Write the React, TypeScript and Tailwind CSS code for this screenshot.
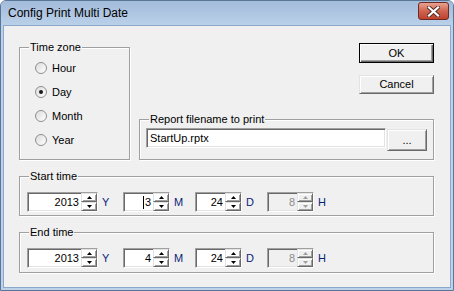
import type { ReactNode } from "react";

const sunken =
  "border border-t-[#a0a0a0] border-l-[#a0a0a0] border-b-white border-r-white shadow-[inset_1px_1px_0_#696969,inset_-1px_-1px_0_#e3e3e3]";
const raised =
  "border border-t-[#e3e3e3] border-l-[#e3e3e3] border-b-[#696969] border-r-[#696969] shadow-[inset_1px_1px_0_#fff,inset_-1px_-1px_0_#a0a0a0]";

function Group({ label, className, children }: { label: string; className: string; children: ReactNode }) {
  return (
    <div className={`border border-[#a0a0a0] shadow-[inset_1px_1px_0_#fff,1px_1px_0_#fff] ${className}`}>
      <div className="-mt-[7px] ml-[9px] w-fit bg-[#f0f0f0] px-px leading-[13px]">{label}</div>
      {children}
    </div>
  );
}

function Radio({ label, checked }: { label: string; checked?: boolean }) {
  return (
    <div className="flex h-[24px] items-center">
      <div className="flex h-[12px] w-[12px] items-center justify-center rounded-full border border-[#8e8f8f] bg-gradient-to-br from-[#dcdcdc] to-white">
        {checked && <div className="h-[4px] w-[4px] rounded-full bg-[#1a1a1a]" />}
      </div>
      <span className="ml-[5px]">{label}</span>
    </div>
  );
}

function Arrow({ up, disabled }: { up?: boolean; disabled?: boolean }) {
  return (
    <div className={`flex flex-1 items-center justify-center ${raised}`}>
      <svg width="5" height="3" viewBox="0 0 5 3">
        <path
          d={up ? "M2.5 0L5 3H0Z" : "M0 0H5L2.5 3Z"}
          fill={disabled ? "#a0a0a0" : "#000"}
        />
      </svg>
    </div>
  );
}

function Spin({
  value,
  width,
  unit,
  unitWidth,
  disabled,
  caret,
}: {
  value: string;
  width: string;
  unit: string;
  unitWidth: string;
  disabled?: boolean;
  caret?: boolean;
}) {
  return (
    <div className="flex items-center">
      <div className={`flex h-[20px] ${width} ${sunken} ${disabled ? "bg-[#f0f0f0]" : "bg-white"}`}>
        <div
          className={`flex flex-1 items-center justify-end pr-[2px] ${disabled ? "text-[#8d8d8d]" : "text-black"}`}
        >
          {caret && <span className="mr-px h-[13px] w-px bg-black" />}
          {value}
        </div>
        <div className="flex w-[16px] flex-col">
          <Arrow up disabled={disabled} />
          <Arrow disabled={disabled} />
        </div>
      </div>
      <span className={`${unitWidth} pl-[4px] text-[#0a1e78]`}>{unit}</span>
    </div>
  );
}

function TimeRow({ month }: { month: string }) {
  return (
    <div className="flex pl-[7px] pt-[9px]">
      <Spin value="2013" width="w-[71px]" unit="Y" unitWidth="w-[25px]" />
      <Spin value={month} width="w-[47px]" unit="M" unitWidth="w-[25px]" caret={month === "3"} />
      <Spin value="24" width="w-[47px]" unit="D" unitWidth="w-[25px]" />
      <Spin value="8" width="w-[47px]" unit="H" unitWidth="w-[20px]" disabled />
    </div>
  );
}

export default function App() {
  return (
    <div
      className="flex h-[291px] w-[454px] flex-col overflow-hidden rounded-t-[6px] border border-[#5a7595] bg-[#bcd2ea] text-[11px] text-black"
      style={{ fontFamily: '"Liberation Sans", Arial, sans-serif' }}
    >
      <div className="flex h-[24px] shrink-0 items-center bg-gradient-to-b from-[#a3bcdb] to-[#bad0e9] pl-[7px] pr-[4px]">
        <span className="flex-1 text-[12px] text-black">Config Print Multi Date</span>
        <div className="mb-[4px] flex h-[18px] w-[31px] items-center justify-center rounded-[3px] border border-[#6d2a22] bg-gradient-to-b from-[#e7a291] via-[#cf6450] to-[#c0412c]">
          <svg width="13" height="11" viewBox="0 0 13 11">
            <path d="M2 1.5L11 9.5M11 1.5L2 9.5" stroke="#5a2a24" strokeWidth="4" strokeLinecap="square" />
            <path d="M2 1.5L11 9.5M11 1.5L2 9.5" stroke="#fff" strokeWidth="2.2" strokeLinecap="square" />
          </svg>
        </div>
      </div>
      <div className="mx-[2px] mb-[2px] flex-1 border border-[#8aa8cc] bg-[#f0f0f0] pl-[15px] pt-[17px]">
        <div className="flex">
          <Group label="Time zone" className="mt-[4px] h-[113px] w-[111px]">
            <div className="pl-[15px] pt-[2px]">
              <Radio label="Hour" />
              <Radio label="Day" checked />
              <Radio label="Month" />
              <Radio label="Year" />
            </div>
          </Group>
          <div className="ml-[9px] flex flex-col">
            <div className="flex justify-end">
              <button className="flex h-[20px] w-[75px] items-center justify-center border border-black shadow-[inset_1px_1px_0_#fff,inset_-1px_-1px_0_#696969,inset_-2px_-2px_0_#a0a0a0]">
                OK
              </button>
            </div>
            <div className="mt-[12px] flex justify-end">
              <button className={`flex h-[19px] w-[75px] items-center justify-center ${raised}`}>Cancel</button>
            </div>
            <Group label="Report filename to print" className="mt-[25px] h-[41px] w-[295px]">
              <div className="flex items-start pl-[6px] pt-[2px]">
                <div className={`flex h-[20px] w-[240px] items-center bg-white pl-[3px] ${sunken}`}>StartUp.rptx</div>
                <button className={`ml-[1px] mt-px flex h-[22px] w-[40px] items-center justify-center ${raised}`}>
                  ...
                </button>
              </div>
            </Group>
          </div>
        </div>
        <Group label="Start time" className="mt-[16px] h-[40px] w-[415px]">
          <TimeRow month="3" />
        </Group>
        <Group label="End time" className="mt-[16px] h-[41px] w-[415px]">
          <TimeRow month="4" />
        </Group>
      </div>
    </div>
  );
}
